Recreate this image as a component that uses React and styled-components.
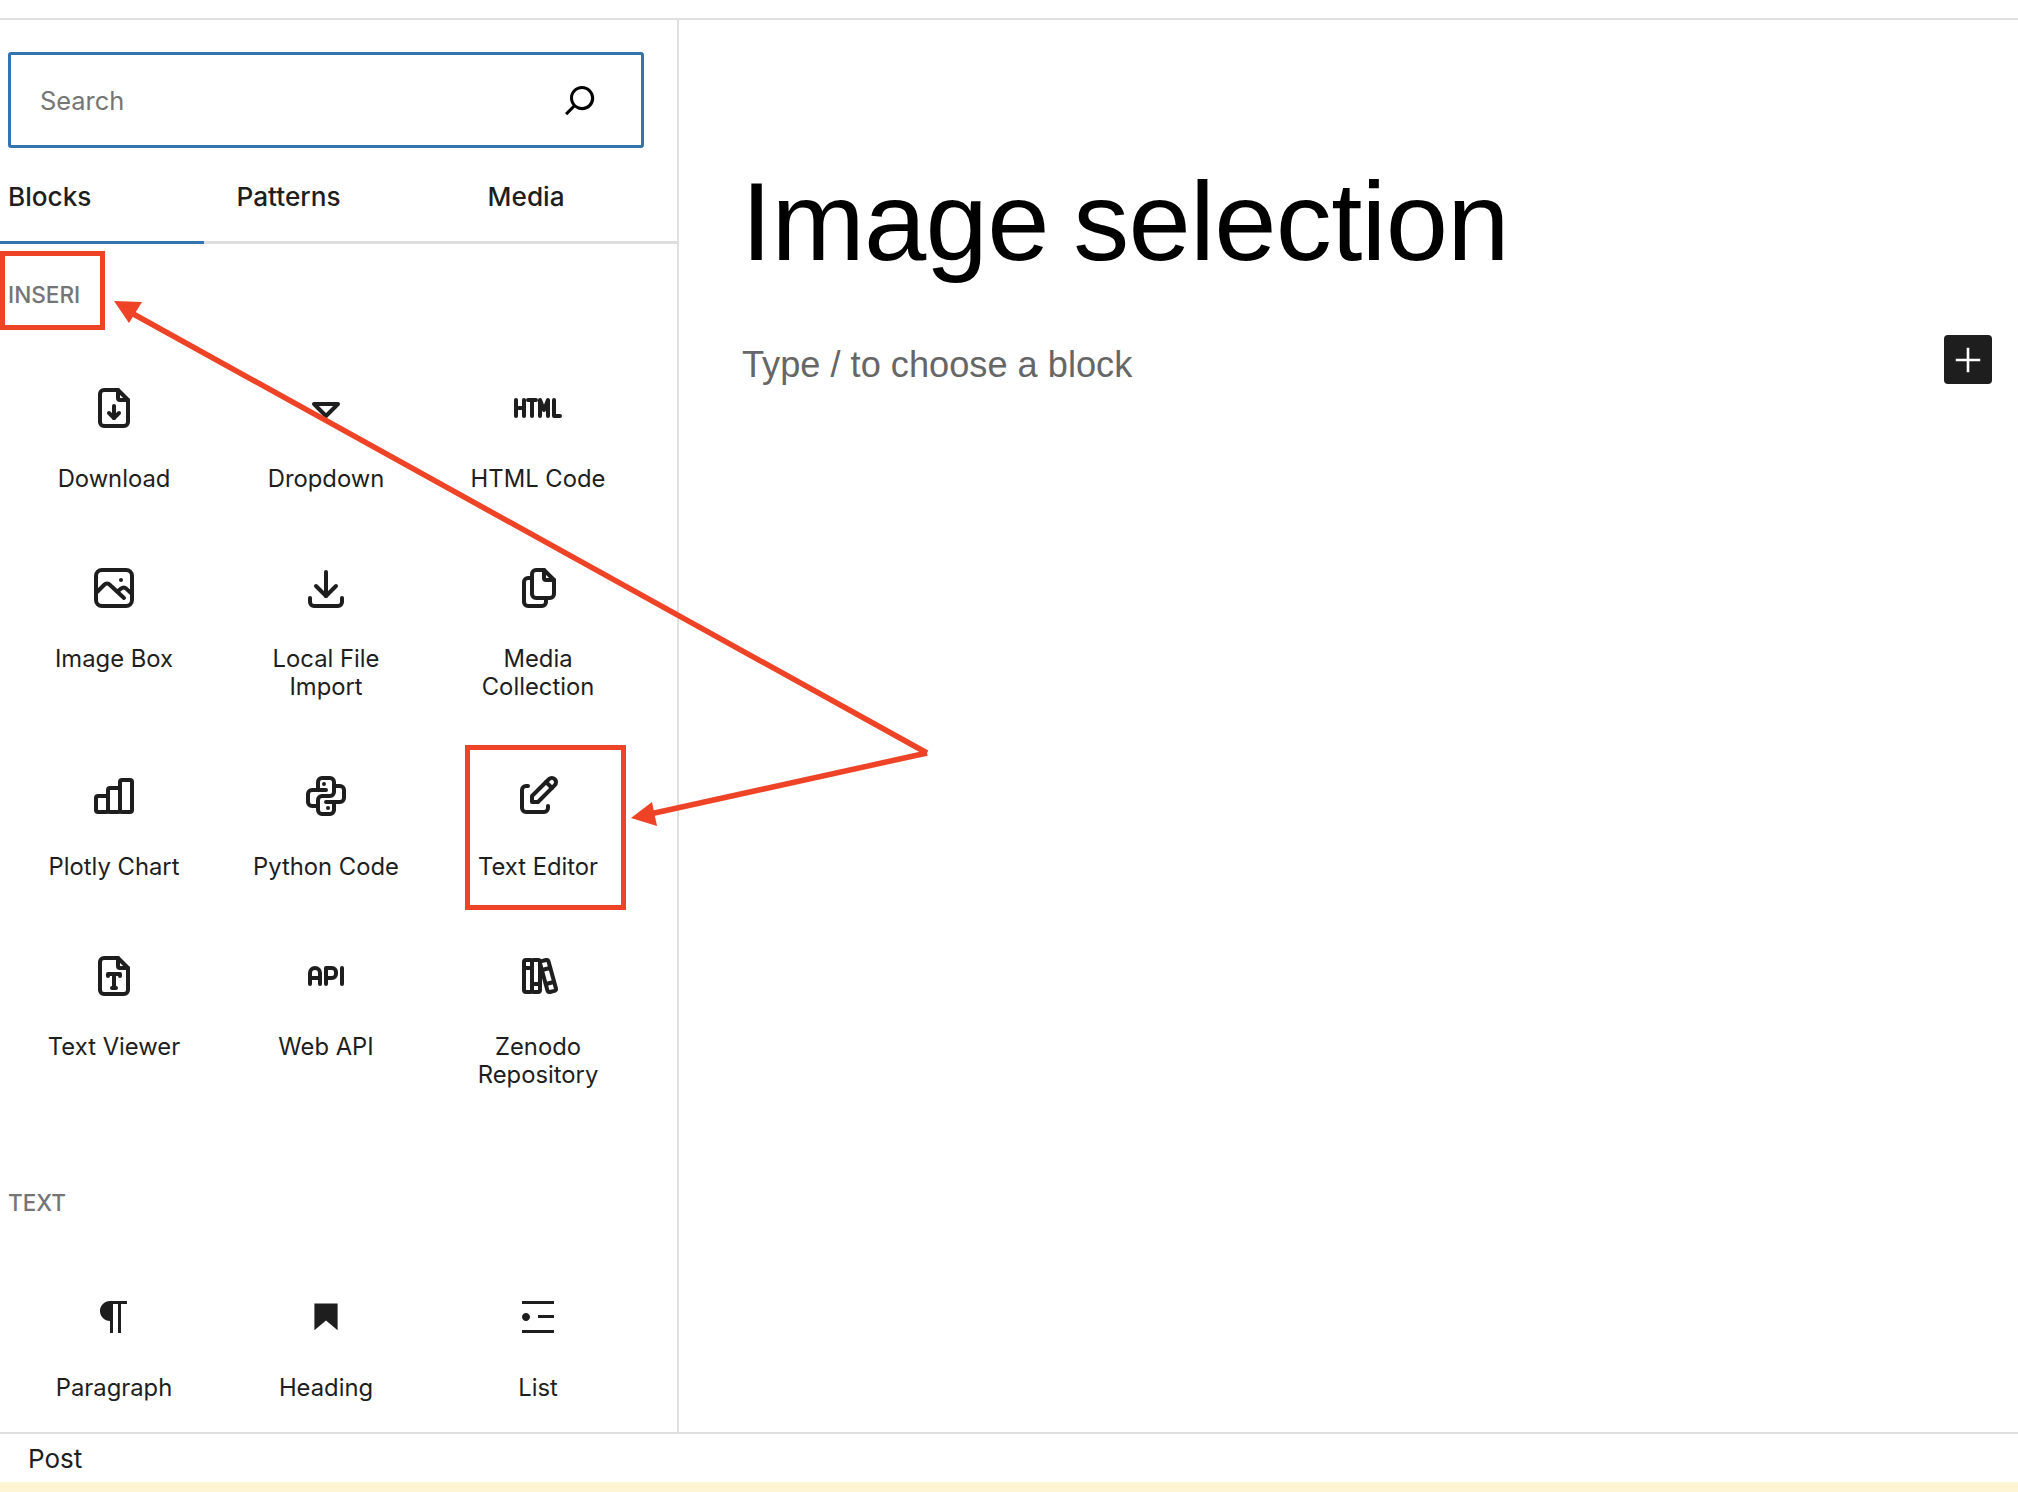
import React from 'react'
import styled, { createGlobalStyle } from 'styled-components'
import {
  TbFileDownload,
  TbCaretDown,
  TbDownload,
  TbFiles,
  TbBrandPython,
  TbEdit,
  TbFileTypography,
  TbApi,
  TbBooks,
  TbHtml,
} from 'react-icons/tb'

const GlobalStyle = createGlobalStyle`
  html, body {
    margin: 0;
    padding: 0;
    background: #fff;
  }
  * {
    box-sizing: border-box;
  }
`

const Page = styled.div`
  position: relative;
  width: 2018px;
  height: 1492px;
  display: flex;
  flex-direction: column;
  overflow: hidden;
  font-family: Inter, "Liberation Sans", sans-serif;
  color: #1e1e1e;
`

const TopBar = styled.div`
  height: 20px;
  flex: none;
  border-bottom: 2px solid #e0e0e0;
`

const Main = styled.div`
  flex: 1;
  min-height: 0;
  display: flex;
`

const Sidebar = styled.aside`
  width: 679px;
  flex: none;
  border-right: 2px solid #e0e0e0;
  overflow: hidden;
`

const SearchWrap = styled.div`
  padding: 32px 0 0 8px;
`

const SearchBox = styled.div`
  width: 636px;
  height: 96px;
  border: 3px solid #3574b2;
  border-radius: 3px;
  display: flex;
  align-items: center;
  justify-content: space-between;
  padding: 0 37px 0 29px;
  font-size: 25.4px;
  color: #757575;
`

const Tabs = styled.div`
  height: 96px;
  display: flex;
  border-bottom: 3px solid #dfdfdf;
`

const Tab = styled.div`
  height: 96px;
  padding: 4px 115px 0 32px;
  display: flex;
  align-items: center;
  font-size: 26.2px;
  font-weight: 500;
  white-space: nowrap;
  border-bottom: 3px solid ${({ $active }) => ($active ? '#3574b2' : 'transparent')};

  &:first-child {
    padding-left: 8px;
    padding-right: 113px;
  }
`

const SectionTitle = styled.h2`
  margin: 1px 0 40px 8px;
  font-size: 22.6px;
  line-height: 26px;
  font-weight: 500;
  color: #757575;
  text-transform: uppercase;
`

const Section = styled.section`
  padding-top: 37px;

  & + & {
    margin-top: 28px;
  }

  & + & ${SectionTitle} {
    margin-bottom: 41px;
  }
`

const BlockGrid = styled.div`
  display: grid;
  grid-template-columns: repeat(3, 212px);
  padding-left: 8px;
`

const BlockItem = styled.div`
  padding: 36px 16px 35px;
  display: flex;
  flex-direction: column;
  align-items: center;
  text-align: center;
`

const IconSlot = styled.div`
  width: 48px;
  height: 48px;
  margin-bottom: 33px;
  display: flex;
  align-items: center;
  justify-content: center;
`

const BlockLabel = styled.div`
  font-size: 23.8px;
  line-height: 28px;
`

const Content = styled.main`
  flex: 1;
  min-width: 0;
  padding: 134px 26px 0 62px;
`

const Title = styled.h1`
  margin: 0;
  font-family: "Liberation Sans", Arial, sans-serif;
  font-size: 112px;
  line-height: 136px;
  font-weight: 400;
  letter-spacing: -0.7px;
  word-spacing: -6px;
  color: #000;
`

const ParagraphRow = styled.div`
  margin-top: 54px;
  display: flex;
  align-items: center;
  justify-content: space-between;
`

const Placeholder = styled.div`
  margin-left: 1px;
  font-family: "Liberation Sans", Arial, sans-serif;
  font-size: 36.2px;
  color: #666;
`

const AddButton = styled.div`
  width: 48px;
  height: 49px;
  margin-top: -11px;
  border-radius: 4px;
  background: #1e1e1e;
  color: #fff;
  display: flex;
  align-items: center;
  justify-content: center;
`

const Footer = styled.footer`
  height: 50px;
  flex: none;
  border-top: 2px solid #e0e0e0;
  padding-left: 28px;
  display: flex;
  align-items: center;
  font-size: 26px;
`

const NoticeStrip = styled.div`
  height: 10px;
  flex: none;
  background: #fef5d4;
`

const RedBox = styled.div`
  position: absolute;
  left: ${({ $x }) => $x}px;
  top: ${({ $y }) => $y}px;
  width: ${({ $w }) => $w}px;
  height: ${({ $h }) => $h}px;
  border: 5px solid #ee4326;
`

const ArrowLayer = styled.svg`
  position: absolute;
  left: 0;
  top: 0;
  pointer-events: none;
`

const SearchIcon = () => (
  <svg width="48" height="48" viewBox="0 0 24 24" fill="#000">
    <path d="M13 5c-3.3 0-6 2.7-6 6 0 1.4.5 2.7 1.3 3.7l-3.8 3.8 1.1 1.1 3.8-3.8c1 .8 2.3 1.3 3.7 1.3 3.3 0 6-2.7 6-6S16.3 5 13 5zm0 1.5c2.5 0 4.5 2 4.5 4.5s-2 4.5-4.5 4.5-4.5-2-4.5-4.5 2-4.5 4.5-4.5z" />
  </svg>
)

const ParagraphIcon = () => (
  <svg width="48" height="48" viewBox="0 0 24 24" fill="#1e1e1e">
    <path d="m9.99609 14v-.2251l.00391.0001v6.225h1.5v-14.5h2.5v14.5h1.5v-14.5h3v-1.5h-8.50391c-2.76142 0-5 2.23858-5 5 0 2.7614 2.23858 5 5 5z" />
  </svg>
)

const HeadingIcon = () => (
  <svg width="48" height="48" viewBox="0 0 24 24" fill="#1e1e1e">
    <path d="M6.2 5.2v13.4l5.8-4.8 5.8 4.8V5.2z" />
  </svg>
)

const ListIcon = () => (
  <svg width="48" height="48" viewBox="0 0 24 24" fill="#1e1e1e">
    <path d="M4 4v1.5h16V4H4zm8 8.5h8V11h-8v1.5zM4 20h16v-1.5H4V20zm4-8c0-1.1-.9-2-2-2s-2 .9-2 2 .9 2 2 2 2-.9 2-2z" />
  </svg>
)

const PlusIcon = () => (
  <svg width="42" height="42" viewBox="0 0 24 24" fill="#fff">
    <path d="M11.25 5h1.5v6.25H19v1.5h-6.25V19h-1.5v-6.25H5v-1.5h6.25z" />
  </svg>
)

const ImageBoxIcon = () => (
  <svg width="48" height="48" viewBox="0 0 24 24" fill="none" stroke="currentColor" strokeWidth="2" strokeLinecap="round" strokeLinejoin="round">
    <path d="M15.5 8h.01" />
    <rect x="3" y="3" width="18" height="18" rx="3" />
    <path d="M3 14.5l4-4c1-1 2.2-1 3 0l7 6.5" />
    <path d="M14 13.5l1.5-1.2c.9-.7 1.8-.7 2.6 0l2.9 2.7" />
  </svg>
)

const PlotlyIcon = () => (
  <svg width="48" height="48" viewBox="0 0 24 24" fill="none" stroke="currentColor" strokeWidth="2" strokeLinecap="round" strokeLinejoin="round">
    <rect x="3" y="12" width="6" height="8" rx="1" />
    <rect x="9" y="8" width="6" height="12" rx="1" />
    <rect x="15" y="4" width="6" height="16" rx="1" />
  </svg>
)

const inseriBlocks = [
  { label: 'Download', icon: <TbFileDownload size={48} /> },
  { label: 'Dropdown', icon: <TbCaretDown size={48} /> },
  { label: 'HTML Code', icon: <TbHtml size={48} /> },
  { label: 'Image Box', icon: <ImageBoxIcon /> },
  { label: 'Local File Import', icon: <TbDownload size={48} /> },
  { label: 'Media Collection', icon: <TbFiles size={48} /> },
  { label: 'Plotly Chart', icon: <PlotlyIcon /> },
  { label: 'Python Code', icon: <TbBrandPython size={48} /> },
  { label: 'Text Editor', icon: <TbEdit size={48} /> },
  { label: 'Text Viewer', icon: <TbFileTypography size={48} /> },
  { label: 'Web API', icon: <TbApi size={48} /> },
  { label: 'Zenodo Repository', icon: <TbBooks size={48} /> },
]

const textBlocks = [
  { label: 'Paragraph', icon: <ParagraphIcon /> },
  { label: 'Heading', icon: <HeadingIcon /> },
  { label: 'List', icon: <ListIcon /> },
]

const BlockSection = ({ title, blocks }) => (
  <Section>
    <SectionTitle>{title}</SectionTitle>
    <BlockGrid>
      {blocks.map((block) => (
        <BlockItem key={block.label}>
          <IconSlot>{block.icon}</IconSlot>
          <BlockLabel>{block.label}</BlockLabel>
        </BlockItem>
      ))}
    </BlockGrid>
  </Section>
)

const App = () => (
  <Page>
    <GlobalStyle />
    <TopBar />
    <Main>
      <Sidebar>
        <SearchWrap>
          <SearchBox>
            Search
            <SearchIcon />
          </SearchBox>
        </SearchWrap>
        <Tabs>
          <Tab $active>Blocks</Tab>
          <Tab>Patterns</Tab>
          <Tab>Media</Tab>
        </Tabs>
        <BlockSection title="Inseri" blocks={inseriBlocks} />
        <BlockSection title="Text" blocks={textBlocks} />
      </Sidebar>
      <Content>
        <Title>Image selection</Title>
        <ParagraphRow>
          <Placeholder>Type / to choose a block</Placeholder>
          <AddButton>
            <PlusIcon />
          </AddButton>
        </ParagraphRow>
      </Content>
    </Main>
    <Footer>Post</Footer>
    <NoticeStrip />

    <RedBox $x={0} $y={251} $w={105} $h={79} />
    <RedBox $x={465} $y={745} $w={161} $h={165} />
    <ArrowLayer width="2018" height="1492" viewBox="0 0 2018 1492">
      <path d="M927 753L128 311M927 753L650 814" fill="none" stroke="#ee4326" strokeWidth="5.5" />
      <path d="M114 301L142 302L129 323z" fill="#ee4326" />
      <path d="M631 818L652 802L657 826z" fill="#ee4326" />
    </ArrowLayer>
  </Page>
)

export default App
